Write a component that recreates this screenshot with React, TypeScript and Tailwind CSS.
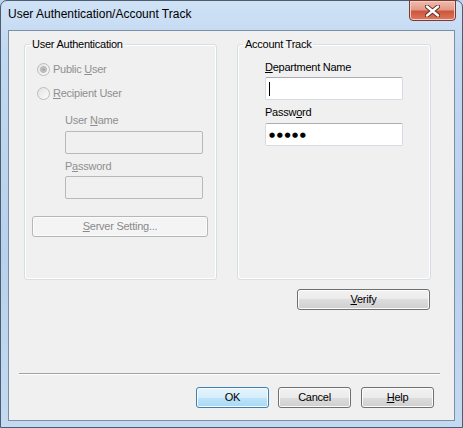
import React from "react";

const ui = "font-['Liberation_Sans',Arial,sans-serif] text-[11px] leading-[13px] tracking-[-0.25px]";

const Key = ({ children }: { children: React.ReactNode }) => (
  <span className="underline underline-offset-[1px] decoration-1">{children}</span>
);

function Radio({ checked, label }: { checked?: boolean; label: React.ReactNode }) {
  return (
    <div className="flex items-center h-[16px] gap-[3px] text-[#8f8f8f]">
      <span className="w-[13px] h-[13px] rounded-full border border-[#bcbcbc] bg-[linear-gradient(135deg,#e3e3e3,#fbfbfb)] flex items-center justify-center">
        {checked && (
          <span className="w-[7px] h-[7px] rounded-full border border-[#b4b4b4] bg-[#a9a9a9] shadow-[inset_0_0_0_1px_#c8c8c8]" />
        )}
      </span>
      <span>{label}</span>
    </div>
  );
}

function TextBox({ disabled, children }: { disabled?: boolean; children?: React.ReactNode }) {
  return (
    <div
      className={
        disabled
          ? "w-[138px] h-[23px] rounded-[2px] border border-[#b6b9bc] bg-[#f0f0f0]"
          : "w-[138px] h-[23px] rounded-[2px] border border-[#d5dbe3] border-t-[#abadb3] bg-white flex items-center pl-[2px]"
      }
    >
      {children}
    </div>
  );
}

function Button({
  children,
  width,
  disabled,
  primary,
}: {
  children: React.ReactNode;
  width: string;
  disabled?: boolean;
  primary?: boolean;
}) {
  let cls =
    "h-[21px] rounded-[3px] border flex items-center justify-center shadow-[inset_0_0_0_1px_#fbfbfb] ";
  if (disabled) cls += "border-[#b4b6b8] bg-[#f4f4f4] text-[#8a8a8a]";
  else if (primary)
    cls +=
      "border-[#3c7fb1] bg-[linear-gradient(#e5f4fc_0%,#d6eefb_50%,#bde4f9_50%,#a9d8f2_100%)] shadow-[inset_0_0_0_1px_#97dcfa] text-black";
  else
    cls +=
      "border-[#707070] bg-[linear-gradient(#f2f2f2_0%,#ebebeb_50%,#dddddd_50%,#cfcfcf_100%)] text-black";
  return <div className={`${cls} ${width}`}>{children}</div>;
}

export default function App() {
  return (
    <div className="w-[463px] h-[428px] bg-[#bcd4ee]">
      <div className="w-[463px] h-[428px] rounded-t-[7px] border border-[#4d5d70] bg-[linear-gradient(180deg,#cfe2f6_0%,#c1d8f1_12%,#b8d1ec_60%,#c4daf1_100%)] flex flex-col">
        {/* title bar */}
        <div className="h-[29px] shrink-0 flex items-start justify-between pl-[7px] pr-[6px]">
          <div className="mt-[6px] font-['Liberation_Sans',Arial,sans-serif] text-[12px] leading-[15px] text-black">
            User Authentication/Account Track
          </div>
          <div className="mt-[-1px] w-[47px] h-[21px] rounded-b-[4px] border border-[#7a3a30] bg-[linear-gradient(#efbcb0_0%,#e29a88_45%,#cf553c_55%,#dc7a60_100%)] shadow-[inset_0_0_0_1px_#f3cdc3] flex items-center justify-center">
            <svg width="15" height="12" viewBox="0 0 15 12">
              <path
                d="M2 1.5 L13 10.5 M13 1.5 L2 10.5"
                stroke="#5a2a20"
                strokeWidth="4.2"
                strokeLinecap="round"
              />
              <path
                d="M2 1.5 L13 10.5 M13 1.5 L2 10.5"
                stroke="#ffffff"
                strokeWidth="2.4"
                strokeLinecap="round"
              />
            </svg>
          </div>
        </div>

        {/* client area */}
        <div className={`flex-1 mx-[7px] mb-[6px] border border-[#7b8fa6] bg-[#f0f0f0] flex flex-col ${ui}`}>
          <div className="flex pl-[15px] pt-[7px] gap-[20px]">
            <fieldset className="w-[193px] h-[242px] rounded-[3px] border border-[#d5dfe5] shadow-[inset_0_0_0_1px_#ffffff] p-0 flex flex-col items-start">
              <legend className="ml-[5px] px-[2px] leading-[12px] text-black">User Authentication</legend>
              <div className="mt-[11px] ml-[12px]">
                <Radio checked label={<>Public <Key>U</Key>ser</>} />
              </div>
              <div className="mt-[8px] ml-[12px]">
                <Radio label={<><Key>R</Key>ecipient User</>} />
              </div>
              <div className="mt-[13px] ml-[40px] text-[#8f8f8f]">
                User <Key>N</Key>ame
              </div>
              <div className="mt-[4px] ml-[40px]">
                <TextBox disabled />
              </div>
              <div className="mt-[6px] ml-[40px] text-[#8f8f8f]">
                P<Key>a</Key>ssword
              </div>
              <div className="mt-[3px] ml-[40px]">
                <TextBox disabled />
              </div>
              <div className="mt-[17px] ml-[7px]">
                <Button width="w-[176px]" disabled>
                  <span>
                    <Key>S</Key>erver Setting...
                  </span>
                </Button>
              </div>
            </fieldset>

            <div className="flex flex-col w-[194px]">
              <fieldset className="w-[194px] h-[242px] rounded-[3px] border border-[#d5dfe5] shadow-[inset_0_0_0_1px_#ffffff] p-0 flex flex-col items-start">
                <legend className="ml-[5px] px-[2px] leading-[12px] text-black">Account Track</legend>
                <div className="mt-[11px] ml-[27px] text-black">
                  <Key>D</Key>epartment Name
                </div>
                <div className="mt-[3px] ml-[27px]">
                  <TextBox>
                    <span className="ml-[1px] w-px h-[14px] bg-black" />
                  </TextBox>
                </div>
                <div className="mt-[6px] ml-[27px] text-black">
                  Passw<Key>o</Key>rd
                </div>
                <div className="mt-[4px] ml-[27px]">
                  <TextBox>
                    <span className="ml-[1px] font-['DejaVu_Sans',sans-serif] text-[7px] leading-[10px] tracking-[1.6px] text-black">
                      ●●●●●
                    </span>
                  </TextBox>
                </div>
              </fieldset>
              <div className="mt-[9px] self-end mr-[1px]">
                <Button width="w-[133px]">
                  <span>
                    <Key>V</Key>erify
                  </span>
                </Button>
              </div>
            </div>
          </div>

          <div className="mt-[63px] ml-[10px] w-[421px] h-px bg-[#a0a0a0] shadow-[0_1px_0_#ffffff]" />

          <div className="mt-[13px] flex justify-end pr-[20px] gap-[9px]">
            <Button width="w-[73px]" primary>
              OK
            </Button>
            <Button width="w-[73px]">Cancel</Button>
            <div className="ml-[1px]">
              <Button width="w-[73px]">
                <span>
                  <Key>H</Key>elp
                </span>
              </Button>
            </div>
          </div>
        </div>
      </div>
    </div>
  );
}
